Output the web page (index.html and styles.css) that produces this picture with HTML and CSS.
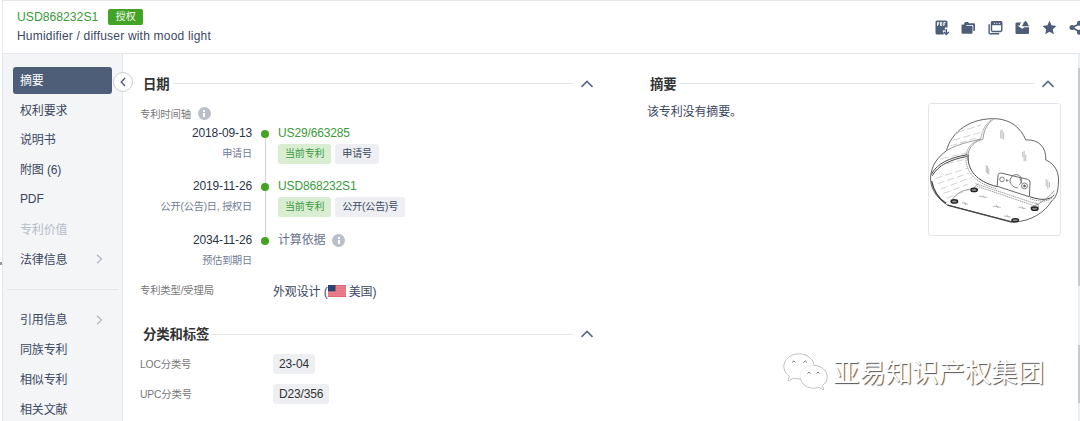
FILE: index.html
```html
<!DOCTYPE html>
<html lang="zh-CN">
<head>
    <title>USD868232S1</title>
    <meta charset="utf-8">
    <link rel="stylesheet" href="styles.css">
</head>
<body>
    <div class="app">
        <!-- Header -->
        <div class="header">
            <div class="patent">
                <div class="patent-number"><a>USD868232S1</a><span class="badge">授权</span></div>
                <div class="patent-name">Humidifier / diffuser with mood light</div>
            </div>
            <div class="toolbar">
                <svg width="15" height="16" viewBox="0 0 15 16"><path fill="#4e5d78" d="M2 .5h9q1.500 0 1.500 1.500v5.500H9.800v3H7.500L9 14.500H2Q.5 14.500.5 13V2Q.5.500 2 .5z"/><path stroke="#fff" stroke-width=".9" fill="none" d="M2.500 6V2.400h1.300v1.800H2.500M5.500 2.400v3.200h1.300V2.400zM8.800 6V2.400h2M8.800 4h1.500"/><path stroke="#4e5d78" stroke-width="1.500" fill="none" d="M11.300 9v5.500M8.800 12l2.500 2.500 2.500-2.500"/></svg>
                <svg width="15" height="16" viewBox="0 0 15 16"><path fill="#4e5d78" d="M3.300 3.200 4 2h3l1 1.200h5q1 0 1 1V10q0 1-1 1h-.7V6q0-1-1-1H3.300z"/><path fill="#4e5d78" d="M.5 5.500q0-1 1-1h3l1.200 1.300h4.800q1 0 1 1v6q0 1-1 1h-9q-1 0-1-1z"/></svg>
                <svg width="15" height="16" viewBox="0 0 16 16"><path fill="none" stroke="#4e5d78" stroke-width="1.500" d="M1.200 4v9q0 1.200 1.200 1.200H12"/><rect x="3.700" y="1.200" width="11" height="10.500" rx="1.200" fill="none" stroke="#4e5d78" stroke-width="1.500"/><path fill="#4e5d78" d="M3.500 1h11.500v4H3.500z"/><path stroke="#fff" stroke-width="1" stroke-dasharray="1.200 1.500" d="M6.300 3h7"/></svg>
                <svg width="15" height="16" viewBox="0 0 15 16"><path fill="#4e5d78" d="M1.500 2.500h4.800L5 4v1.500H2.500L7 8.800l2.500-1.500H14V13q0 1-1 1H1.500q-1 0-1-1V3.500q0-1 1-1z"/><path fill="#4e5d78" d="M7.300 6.200V5.300l.9-1q0-2.500 2.300-3.300 2.300.8 2.300 3.300l.9 1v.9z"/></svg>
                <svg width="15" height="16" viewBox="0 0 15 16"><path fill="#4e5d78" d="m7.500.5 2 4.800 5 .6-3.700 3.400 1 5-4.300-2.500-4.300 2.500 1-5L.5 5.900l5-.6z"/></svg>
                <svg width="15" height="16" viewBox="0 0 15 16"><path fill="none" stroke="#4e5d78" stroke-width="1.600" d="m11 3.500-8 4 8 4.500"/><g fill="#4e5d78"><circle cx="3" cy="7.600" r="2.500"/><circle cx="10.500" cy="3.200" r="2.500"/><circle cx="10.500" cy="12.200" r="2.500"/></g></svg>
            </div>
        </div>

        <div class="body">
            <!-- Sidebar -->
            <div class="sidebar">
                <div class="menu-item active">摘要</div>
                <div class="menu-item">权利要求</div>
                <div class="menu-item">说明书</div>
                <div class="menu-item">附图 (6)</div>
                <div class="menu-item">PDF</div>
                <div class="menu-item disabled">专利价值</div>
                <div class="menu-item">法律信息<svg class="arrow" width="7" height="10" viewBox="0 0 7 10"><path d="m1 .8 4.500 4.200L1 9.200"/></svg></div>
                <div class="divider"></div>
                <div class="menu-item">引用信息<svg class="arrow" width="7" height="10" viewBox="0 0 7 10"><path d="m1 .8 4.500 4.200L1 9.200"/></svg></div>
                <div class="menu-item">同族专利</div>
                <div class="menu-item">相似专利</div>
                <div class="menu-item">相关文献</div>
                <div class="collapse"><svg width="6" height="10" viewBox="0 0 6 10"><path d="M5 1 1.200 5 5 9"/></svg></div>
            </div>

            <!-- Dates and classification -->
            <div class="details">
                <div class="section-title"><b>日期</b><i></i><svg width="14" height="8" viewBox="0 0 14 8"><path d="m1.500 6.800 5.500-5.300 5.500 5.300"/></svg></div>
                <div class="row timeline-label">专利时间轴<span class="info"></span></div>
                <div class="timeline">
                    <div class="event">
                        <div class="when"><p>2018-09-13</p><small>申请日</small></div>
                        <div class="dot"></div>
                        <div class="what"><a>US29/663285</a><div class="tags"><span class="tag green">当前专利</span><span class="tag">申请号</span></div></div>
                    </div>
                    <div class="event">
                        <div class="when"><p>2019-11-26</p><small>公开(公告)日, 授权日</small></div>
                        <div class="dot"></div>
                        <div class="what"><a>USD868232S1</a><div class="tags"><span class="tag green">当前专利</span><span class="tag">公开(公告)号</span></div></div>
                    </div>
                    <div class="event">
                        <div class="when"><p>2034-11-26</p><small>预估到期日</small></div>
                        <div class="dot"></div>
                        <div class="what basis">计算依据<span class="info"></span></div>
                    </div>
                </div>
                <div class="row type-row">
                    <span class="label">专利类型/受理局</span>
                    <span class="value">外观设计 (<svg class="flag" width="18" height="12" viewBox="0 0 18 12"><path fill="#e87f8b" d="M0 0h18v12H0z"/><path stroke="#dc5a69" stroke-width=".8" d="M0 .4h18M0 11.600h18"/><path stroke="#e06c7a" stroke-width=".6" d="M0 3.200h18M0 6h18M0 8.800h18"/><path fill="#2c416d" d="M0 0h7.500v6.300H0z"/></svg> 美国)</span>
                </div>
                <div class="section-title second"><b>分类和标签</b><i></i><svg width="14" height="8" viewBox="0 0 14 8"><path d="m1.500 6.800 5.500-5.300 5.500 5.300"/></svg></div>
                <div class="row class-row"><span class="label">LOC分类号</span><span class="code">23-04</span></div>
                <div class="row class-row"><span class="label">UPC分类号</span><span class="code">D23/356</span></div>
            </div>

            <!-- Abstract -->
            <div class="abstract">
                <div class="section-title"><b>摘要</b><i></i><svg width="14" height="8" viewBox="0 0 14 8"><path d="m1.500 6.800 5.500-5.300 5.500 5.300"/></svg></div>
                <div class="abstract-body">
                    <p>该专利没有摘要。</p>
                    <div class="thumb">
                        <svg width="131" height="131" viewBox="25 26 396 398" fill="none" stroke="#666" stroke-width="2.500">
                            <path stroke="#444" d="M77 168C92 110 150 66 232 71c40 4 70 26 86 64 40-2 62 22 61 61 28 12 42 38 38 74-2 26-8 40-18 48-24 38-64 64-119 67L80 333C44 310 26 278 29 245c4-34 20-56 48-77z"/>
                            <path stroke="#888" d="M220 72c-18 12-30 34-32 61-34 8-50 34-45 65"/>
                            <path stroke="#aaa" d="M213 74c-18 14-28 34-32 58-28 10-42 28-44 50"/>
                            <path stroke="#444" stroke-width="3" d="M31 240c18-34 54-50 109-60M34 244c18-32 52-48 106-59M143 180c-4 46 26 82 88 97M331 308c36 12 60 10 74-6"/>
                            <path stroke="#999" stroke-width="3" stroke-dasharray="4 2" d="M136 184c-2 52 32 84 96 100M165 268l192 64M170 276l182 62M331 314c30 10 52 9 66-2"/>
                            <path stroke="#888" d="M77 168c30-18 62-26 104-35M94 318c12-20 32-32 63-34l16-16M354 350c4-10 4-18-6-25M331 340c18-4 54-24 74-52"/>
                            <path stroke="#444" stroke-width="4" d="m80 333 196 52M32 260c6 30 20 52 44 68"/>
                            <path stroke="#444" d="m231 276 3-35q2-7 10-5l80 19q8 3 7 10l-2 43z"/>
                            <circle cx="246" cy="255" r="7"/><path d="M272 253a17 17 0 1 1 25 19M272 251c-6 16 5 28 22 30M300 249l5 18"/><circle cx="314" cy="275" r="9"/><circle cx="314" cy="275" r="3" fill="#555"/><path d="M258 259h8M260 254v8"/>
                            <g stroke="#222" stroke-width="4" fill="#888"><ellipse cx="161" cy="287" rx="10" ry="5"/><ellipse cx="101" cy="322" rx="10" ry="5"/><ellipse cx="345" cy="344" rx="10" ry="5"/><ellipse cx="286" cy="379" rx="10" ry="5"/></g>
                            <path stroke="#999" stroke-width="2" d="M242 106v24M246 104v28M251 112v22M309 172v16M313 168v32M318 180v20M198 212v22M202 214v24M206 222v18M380 254v22M385 258v26M390 264v16M124 326l18 4M132 323l4 10M176 306l24 4M186 303l8 8M218 336l24 4M228 332l6 10M252 366l20 4M260 362l6 8M296 340l22 4M306 337l6 8"/>
                            <path stroke="#bbb" stroke-width="2" stroke-dasharray="22 9" d="M112 112l70-22M98 136l82-24M88 154l90-28M62 192l90-20M48 216l92-24M44 252l100-32M50 268l96-32M60 284l96-36M68 298l74-28M78 312l74-28"/>
                        </svg>
                    </div>
                </div>
            </div>
            <div class="scrollbar"><div class="scroll-thumb"></div><div class="scroll-thumb lower"></div></div>
        </div>
    </div>
    <div class="edge-handle"></div>

    <div class="watermark">
        <svg width="46" height="40" viewBox="0 0 46 40">
            <g class="bubbles">
                <path d="M16 1C7.500 1 1 6.500 1 13.500c0 4 2 7.300 5.500 9.500L5 28l5.500-3q2.500.8 6 .8c8-.1 14.500-5.500 14.500-12.300S24.500 1 16 1z"/>
                <path d="M30.500 12.500c-7.500 0-13 5-13 11.200S23 35 30.500 35q3 0 5.500-.8l4.500 2.500-1.200-4.200c3-2 4.700-5.200 4.700-8.800 0-6.200-6-11.200-13.500-11.200z"/>
            </g>
            <path class="eyes" d="M9 9.500q1.800-3 3.600 0M20.500 9.500q1.800-3 3.600 0M24.500 20.500q1.500-2.600 3 0M33.500 20.500q1.500-2.600 3 0"/>
        </svg>
        <span>亚易知识产权集团</span>
    </div>
</body>
</html>
```
FILE: styles.css
```css
* {
    box-sizing: border-box;
}
body {
    margin: 0;
    width: 1080px;
    height: 421px;
    overflow: hidden;
    position: relative;
    background: #fff;
    color: #3b4761;
    font-family: "Liberation Sans", "Noto Sans CJK SC", sans-serif;
    font-size: 12px;
    letter-spacing: -0.14px;
}
p {
    margin: 0;
}
svg {
    flex: none;
}
a {
    color: #3a9a3a;
}
.app {
    margin-left: 2px;
    height: 421px;
    border-left: 1px solid #e4e6ea;
    border-top: 1px solid #e4e6ea;
}
/* Header */
.header {
    display: flex;
    justify-content: space-between;
    height: 53px;
    border-bottom: 1px solid #e4e6ea;
}
.patent {
    padding: 6px 0 0 14px;
}
.patent-number {
    display: flex;
    align-items: center;
    height: 19px;
    font-size: 12.2px;
    letter-spacing: 0;
}
.badge {
    width: 35px;
    height: 16px;
    margin-left: 10px;
    border-radius: 2px;
    background: #43a324;
    color: #fff;
    font-size: 10px;
    line-height: 15px;
    text-align: center;
}
.patent-name {
    height: 20px;
    line-height: 21px;
    letter-spacing: 0.2px;
}
.toolbar {
    display: flex;
    gap: 11.8px;
    padding: 18.5px 0 0;
    margin-right: -3.5px;
}
.body {
    display: flex;
    height: 367px;
}
/* Sidebar */
.sidebar {
    position: relative;
    width: 120px;
    padding: 13px 10px 0;
    border-right: 1px solid #e4e6ea;
    background: #f3f5f7;
}
.menu-item {
    display: flex;
    align-items: center;
    justify-content: space-between;
    height: 26.8px;
    margin-bottom: 3px;
    padding: 0 9px 2px 7px;
    border-radius: 3px;
}
.menu-item.active {
    background: #4e5d78;
    color: #fff;
}
.menu-item.disabled {
    color: #b7bdc8;
}
.arrow {
    margin-top: 2px;
}
.arrow path {
    fill: none;
    stroke: #b0b7c3;
    stroke-width: 1.2;
}
.divider {
    height: 1px;
    margin: 16px -6px 17px;
    background: #e2e5e9;
}
/* Round button over the sidebar edge */
.collapse {
    position: absolute;
    top: 18px;
    right: -11px;
    display: flex;
    align-items: center;
    justify-content: center;
    width: 20px;
    height: 20px;
    border: 1px solid #c9ced6;
    border-radius: 50%;
    background: #fff;
}
.collapse path {
    fill: none;
    stroke: #4e5d78;
    stroke-width: 1.4;
}
/* Section headings */
.section-title {
    display: flex;
    align-items: center;
    height: 20px;
    padding-left: 3px;
    color: #333;
    font-size: 13.4px;
}
.section-title b {
    margin-top: -2px;
}
.section-title i {
    flex: 1;
    height: 1px;
    margin: 0 7px 0 3px;
    background: #e2e5e9;
}
.section-title path {
    fill: none;
    stroke: #5c6a85;
    stroke-width: 1.7;
}
.details {
    width: 454px;
    margin-left: 17px;
    padding-top: 19.5px;
}
.row {
    display: flex;
    align-items: center;
}
.timeline-label {
    height: 20px;
    margin-top: 9.5px;
    color: #777;
    font-size: 10.3px;
}
.info {
    display: flex;
    align-items: center;
    justify-content: center;
    width: 13px;
    height: 13px;
    margin-left: 7px;
    border-radius: 50%;
    background: #b9c0cc;
}
.info::before {
    content: "";
    width: 2px;
    height: 7px;
    background: linear-gradient(#fff 2px, #b9c0cc 2px, #b9c0cc 3px, #fff 3px);
}
/* Timeline */
.event {
    display: flex;
    height: 53.3px;
}
.when {
    width: 112px;
    text-align: right;
}
.when p {
    height: 20px;
    line-height: 21px;
    color: #2b3447;
}
.when small {
    display: block;
    height: 20px;
    line-height: 22px;
    color: #6f7c94;
    font-size: 10.1px;
    white-space: nowrap;
}
.dot {
    width: 8px;
    margin: 7px 9px -7px;
    background: linear-gradient(#cdd1d9, #cdd1d9) center / 1px 100% no-repeat;
}
.dot::before {
    content: "";
    display: block;
    width: 8px;
    height: 8px;
    border-radius: 50%;
    background: #43a324;
}
.event:last-child .dot {
    background: none;
}
.what {
    line-height: 21px;
}
.basis {
    display: flex;
    align-items: center;
    height: 21px;
    color: #66718a;
}
.tags {
    display: flex;
    gap: 4px;
}
.tag {
    height: 20px;
    padding: 0 6.9px;
    border-radius: 3px;
    background: #edeff2;
    font-size: 10px;
    line-height: 19px;
    letter-spacing: -0.1px;
}
.tag.green {
    background: #d9edd3;
    color: #3a9a3a;
}
.type-row {
    height: 20px;
    margin-top: -2px;
}
.label {
    width: 133px;
    margin-top: -2px;
    color: #777;
    font-size: 10.3px;
}
.value {
    display: flex;
    align-items: center;
    white-space: pre;
}
.second {
    margin-top: 23.5px;
}
.class-row {
    height: 20px;
    margin-bottom: 10px;
}
.second + .class-row {
    margin-top: 10px;
}
.code {
    height: 20px;
    padding: 0 6px;
    border-radius: 3px;
    background: #edeff2;
    color: #333;
    line-height: 20px;
}
/* Abstract */
.abstract {
    width: 414px;
    margin-left: 53px;
    padding-top: 19.5px;
}
.abstract .section-title {
    padding-right: 6px;
}
.abstract-body {
    display: flex;
    justify-content: space-between;
}
.abstract-body p {
    padding-top: 8px;
    line-height: 20px;
}
.thumb {
    width: 133px;
    height: 133px;
    margin-top: 9.5px;
    border: 1px solid #e2e5e9;
    border-radius: 3px;
}
.thumb svg {
    display: block;
}
.scrollbar {
    width: 2px;
    margin-left: auto;
    padding-top: 14px;
    background: #edf0f3;
}
.scroll-thumb {
    height: 218px;
    background: #c8cacc;
}
.scroll-thumb.lower {
    height: 58px;
    margin-top: 59px;
}
/* Panel handle cut off by the left edge */
.edge-handle {
    position: absolute;
    left: 0;
    top: 262px;
    width: 2px;
    height: 3px;
    background: #999;
}
/* Watermark over the page */
.watermark {
    position: absolute;
    left: 783px;
    top: 352px;
    display: flex;
    align-items: center;
    height: 42px;
    color: #fff;
    font-size: 26.4px;
    letter-spacing: 0;
    text-shadow: 1px 1px 1px #555;
}
.watermark span {
    margin: -5px 0 0 4px;
    white-space: nowrap;
}
.bubbles {
    fill: #fff;
    stroke: #ddd;
    stroke-width: 0.5;
    filter: drop-shadow(0.7px 0.7px 0.5px #444);
}
.eyes {
    fill: none;
    stroke: #777;
}
```
